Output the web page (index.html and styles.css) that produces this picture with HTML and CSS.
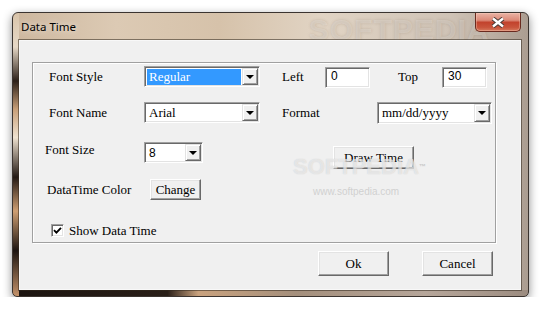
FILE: index.html
```html
<!DOCTYPE html>
<html lang="en">
<head>
    <meta charset="UTF-8">
    <title>Data Time</title>
    <link rel="stylesheet" href="styles.css">
</head>
<body>
    <div class="window">
        <div class="titlebar">
            <span class="title">Data Time</span>
            <span class="title-mark">SOFTPEDIA</span>
            <button class="close-btn" title="Close">
                <svg width="14" height="11" viewBox="0 0 14 11">
                    <path d="M2 1.5 L12 9.5 M12 1.5 L2 9.5" stroke="#4a3a36" stroke-width="4.4" fill="none"/>
                    <path d="M2 1.5 L12 9.5 M12 1.5 L2 9.5" stroke="#ffffff" stroke-width="2.4" fill="none"/>
                </svg>
            </button>
        </div>

        <div class="client">
            <div class="group">
                <div class="row row-style">
                    <label class="lbl lbl-main">Font Style</label>
                    <div class="combo combo-font">
                        <span class="combo-text selected">Regular</span>
                        <span class="combo-arrow"></span>
                    </div>
                    <label class="lbl lbl-left">Left</label>
                    <div class="edit">0</div>
                    <label class="lbl lbl-top">Top</label>
                    <div class="edit">30</div>
                </div>

                <div class="row row-name">
                    <label class="lbl lbl-main">Font Name</label>
                    <div class="combo combo-font">
                        <span class="combo-text">Arial</span>
                        <span class="combo-arrow"></span>
                    </div>
                    <label class="lbl lbl-format">Format</label>
                    <div class="combo combo-format">
                        <span class="combo-text">mm/dd/yyyy</span>
                        <span class="combo-arrow"></span>
                    </div>
                </div>

                <div class="row row-size">
                    <label class="lbl lbl-size">Font Size</label>
                    <div class="combo combo-size">
                        <span class="combo-text sans">8</span>
                        <span class="combo-arrow"></span>
                    </div>
                    <button class="btn btn-draw">Draw Time</button>
                </div>

                <div class="row row-color">
                    <label class="lbl lbl-color">DataTime Color</label>
                    <button class="btn btn-change">Change</button>
                </div>

                <div class="row row-check">
                    <span class="checkbox">
                        <svg width="9" height="9" viewBox="0 0 9 9">
                            <path d="M1 4.2 L3.4 6.6 L8 1.8" stroke="#000" stroke-width="1.9" fill="none"/>
                        </svg>
                    </span>
                    <span class="check-text">Show Data Time</span>
                </div>
            </div>

            <div class="footer">
                <button class="btn btn-dialog">Ok</button>
                <button class="btn btn-dialog">Cancel</button>
            </div>

            <div class="watermark">SOFTPEDIA<span class="tm">™</span></div>
            <div class="watermark-url">www.softpedia.com</div>
        </div>
    </div>
</body>
</html>
```

FILE: styles.css
```css
body {
    margin: 0;
    padding: 12px 0 0 12px;
    background-color: #ffffff;
    font-family: "Liberation Serif", serif;
}

.window {
    position: relative;
    width: 517px;
    height: 285px;
    box-sizing: border-box;
    padding: 0 7px 6px 6px;
    display: flex;
    flex-direction: column;
    border: 1px solid #3b3430;
    border-radius: 6px 6px 5px 5px;
    box-shadow: 0 3px 10px rgba(0, 0, 0, 0.45);
    overflow: hidden;
    background:
        linear-gradient(180deg, #d9c4aa 0%, #e6d8c6 12%, #2c2019 24%, #c89f78 34%, #efe2d0 44%, #231914 58%, #cf9f73 70%, #1c1410 84%, #c4926a 100%) left / 6px 100% no-repeat,
        linear-gradient(90deg, #1b1410 0%, #2a1f18 30%, #c9a27e 36%, #a48f7c 55%, #b6a69a 80%, #9c8c80 100%) bottom / 100% 6px no-repeat,
        linear-gradient(90deg, #cdb79e 0%, #dccab4 20%, #d6c2aa 40%, #e1d4c4 60%, #cfc3b6 85%, #ab9d91 100%);
}

.titlebar {
    position: relative;
    height: 27px;
    display: flex;
    align-items: center;
}

.title {
    margin-left: 2px;
    font-family: "Noto Sans", sans-serif;
    font-size: 11.5px;
    color: #000000;
    text-shadow: 0 0 6px rgba(255, 255, 255, 0.8);
    z-index: 1;
}

.title-mark {
    position: absolute;
    left: 290px;
    top: 0;
    font-family: "Liberation Sans", sans-serif;
    font-weight: bold;
    font-size: 30px;
    letter-spacing: 1px;
    color: rgba(255, 255, 255, 0.22);
    text-shadow: 0 0 3px rgba(120, 100, 80, 0.25);
}

.close-btn {
    margin-left: auto;
    align-self: flex-start;
    width: 46px;
    height: 19px;
    padding: 0;
    display: flex;
    align-items: center;
    justify-content: center;
    border: 1px solid #6a2a1f;
    border-top: none;
    border-radius: 0 0 5px 5px;
    background: linear-gradient(180deg, #eab3a5 0%, #dc8a78 40%, #c2432d 52%, #c9553c 80%, #d67a5e 100%);
    box-shadow: inset 0 0 0 1px rgba(255, 220, 200, 0.35);
    z-index: 1;
}

.client {
    position: relative;
    width: 502px;
    height: 250px;
    box-sizing: border-box;
    background-color: #f0f0f0;
    border: 1px solid #f8f8f8;
    box-shadow: 0 0 0 1px rgba(50, 40, 30, 0.55);
}

.group {
    width: 464px;
    height: 181px;
    box-sizing: border-box;
    margin: 21px 0 0 12px;
    border: 1px solid #a0a0a0;
    box-shadow: 1px 1px 0 #ffffff, inset 1px 1px 0 #ffffff;
}

.row {
    display: flex;
    align-items: flex-start;
}

.row-style {
    margin-top: 3px;
    height: 22px;
    padding-left: 16px;
}

.row-name {
    margin-top: 14px;
    height: 22px;
    padding-left: 16px;
}

.row-size {
    margin-top: 18px;
    height: 26px;
    padding-left: 12px;
}

.row-color {
    margin-top: 11px;
    height: 21px;
    padding-left: 14px;
}

.row-check {
    margin-top: 24px;
    height: 13px;
    padding-left: 18px;
    align-items: center;
}

.lbl {
    font-size: 13px;
    line-height: 21px;
    color: #000000;
}

.lbl-main {
    width: 95px;
}

.lbl-left {
    margin-left: 22px;
    width: 43px;
    line-height: 22px;
}

.lbl-top {
    margin-left: 28px;
    width: 44px;
    line-height: 22px;
}

.lbl-format {
    margin-left: 22px;
    width: 95px;
}

.lbl-size {
    width: 99px;
    line-height: 16px;
}

.lbl-color {
    width: 103px;
}

/* sunken fields */
.edit,
.combo {
    box-sizing: border-box;
    height: 21px;
    background-color: #ffffff;
    border: 1px solid;
    border-color: #a0a0a0 #ffffff #ffffff #a0a0a0;
    box-shadow: inset 1px 1px 0 #696969, inset -1px -1px 0 #e3e3e3;
}

.edit {
    width: 45px;
    margin-top: 1px;
    padding-left: 5px;
    font-family: "Liberation Sans", sans-serif;
    font-size: 12px;
    line-height: 17px;
}

.combo {
    display: flex;
    padding: 1px;
}

.combo-font {
    width: 116px;
}

.combo-format {
    width: 115px;
    height: 22px;
}

.combo-size {
    width: 59px;
}

.combo-text {
    flex: 1;
    margin: 1px 1px 0 1px;
    padding-left: 2px;
    font-size: 13px;
    line-height: 16px;
    color: #000000;
}

.combo-text.selected {
    background-color: #3399ff;
    color: #ffffff;
}

.combo-text.sans {
    font-family: "Liberation Sans", sans-serif;
    font-size: 12px;
}

.combo-arrow {
    position: relative;
    width: 16px;
    box-sizing: border-box;
    background-color: #f0f0f0;
    border: 1px solid;
    border-color: #e3e3e3 #696969 #696969 #e3e3e3;
    box-shadow: inset 1px 1px 0 #ffffff, inset -1px -1px 0 #a0a0a0;
}

.combo-arrow::after {
    content: "";
    position: absolute;
    left: 3px;
    top: 6px;
    width: 0;
    height: 0;
    border-left: 4px solid transparent;
    border-right: 4px solid transparent;
    border-top: 4px solid #000000;
}

/* raised buttons */
.btn {
    box-sizing: border-box;
    padding: 0;
    font-family: "Liberation Serif", serif;
    font-size: 13px;
    color: #000000;
    background-color: #f0f0f0;
    border: 1px solid;
    border-color: #ffffff #696969 #696969 #ffffff;
    box-shadow: inset -1px -1px 0 #a0a0a0, inset 1px 1px 0 #e3e3e3;
}

.btn-draw {
    margin-left: 130px;
    margin-top: 4px;
    width: 81px;
    height: 23px;
}

.btn-change {
    width: 51px;
    height: 21px;
}

.btn-dialog {
    width: 71px;
    height: 25px;
}

.checkbox {
    width: 13px;
    height: 13px;
    box-sizing: border-box;
    display: flex;
    align-items: center;
    justify-content: center;
    background-color: #ffffff;
    border: 1px solid;
    border-color: #a0a0a0 #ffffff #ffffff #a0a0a0;
    box-shadow: inset 1px 1px 0 #696969, inset -1px -1px 0 #e3e3e3;
}

.check-text {
    margin-left: 5px;
    font-size: 13px;
    line-height: 13px;
}

.footer {
    display: flex;
    justify-content: flex-end;
    gap: 33px;
    margin-top: 8px;
    padding-right: 27px;
}

.watermark {
    position: absolute;
    left: 273px;
    top: 115px;
    font-family: "Liberation Sans", sans-serif;
    font-weight: bold;
    font-size: 22px;
    line-height: 22px;
    color: rgba(255, 255, 255, 0.55);
    text-shadow: 0 0 1px rgba(170, 170, 170, 0.6);
    pointer-events: none;
}

.watermark .tm {
    font-size: 7px;
    vertical-align: top;
    color: #c8c8c8;
    text-shadow: none;
}

.watermark-url {
    position: absolute;
    left: 293px;
    top: 146px;
    font-family: "Liberation Sans", sans-serif;
    font-size: 10px;
    line-height: 10px;
    color: #d0d0d0;
    pointer-events: none;
}
```
